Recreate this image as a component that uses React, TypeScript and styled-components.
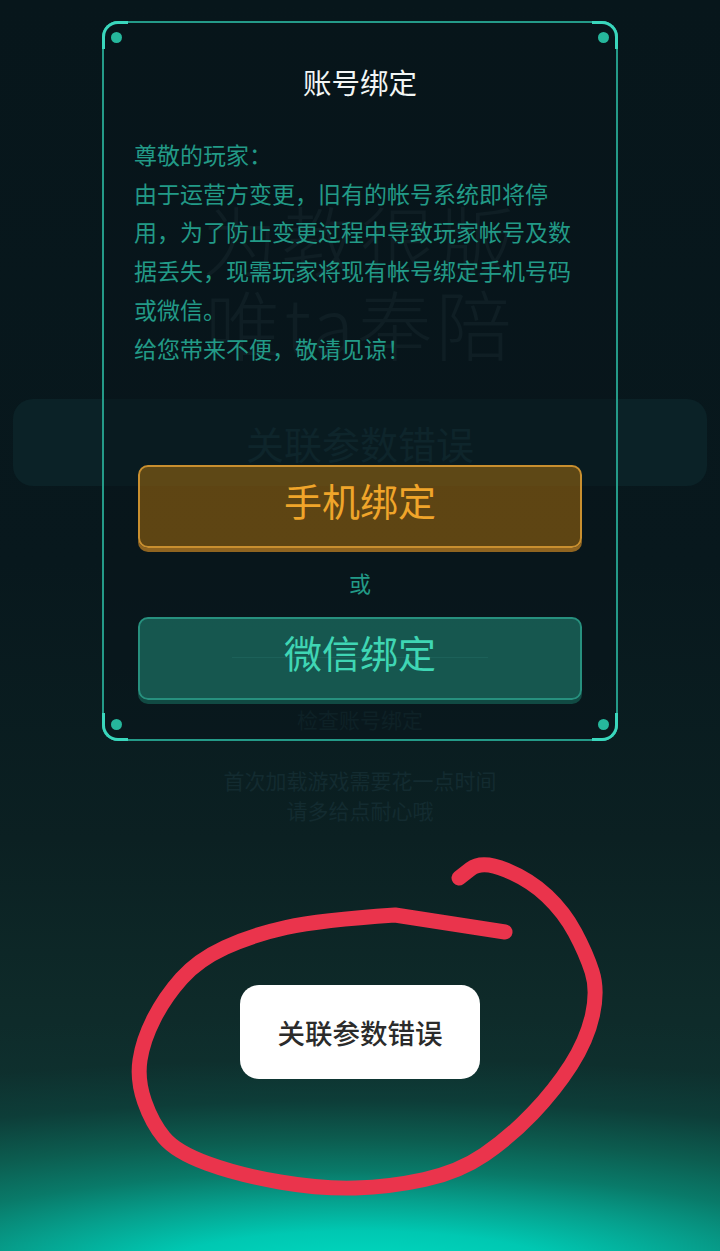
import * as React from 'react';
import styled, { createGlobalStyle } from 'styled-components';

const cjk = '"Noto Sans CJK SC", "Noto Sans", sans-serif';

const GlobalStyle = createGlobalStyle`
  html, body {
    margin: 0;
    padding: 0;
    background: #07151a;
  }
  * {
    box-sizing: border-box;
  }
`;

const Page = styled.div`
  position: relative;
  width: 720px;
  height: 1251px;
  overflow: hidden;
  font-family: ${cjk};
  display: flex;
  flex-direction: column;
  align-items: center;
  padding-top: 196px;
  background:
    radial-gradient(ellipse 1250px 260px at 360px 1275px, #00d6be 0%, #00d2ba 9%, #00c8b2 17%, #06a08d 29%, #097a69 40%, #0c5d50 52%, rgba(13, 62, 57, 0.95) 67%, rgba(14, 50, 47, 0.4) 83%, rgba(14, 45, 43, 0) 100%),
    linear-gradient(180deg, #07161b 0%, #08181d 45%, #0b2022 67%, #0e2a29 80%, #0e2f2e 88%, #0e3330 100%);
`;

const Slogan = styled.div`
  font-size: 76px;
  line-height: 84px;
  font-weight: 300;
  letter-spacing: 3px;
  text-align: center;
  color: #16292f;
`;

const ErrorBar = styled.div`
  width: 694px;
  height: 87px;
  margin-top: 35px;
  border-radius: 20px;
  background: #0b2227;
  color: #15363c;
  font-size: 38px;
  display: flex;
  align-items: center;
  justify-content: center;
`;

const LoadingRule = styled.div`
  width: 256px;
  height: 1px;
  margin-top: 171px;
  background: #1a3a3c;
`;

const LoadingLabel = styled.div`
  margin-top: 46px;
  font-size: 21px;
  line-height: 30px;
  color: #142e33;
`;

const LoadingHint = styled.div`
  margin-top: 31px;
  font-size: 21px;
  line-height: 30px;
  text-align: center;
  color: #132b30;
`;

const Modal = styled.div`
  position: absolute;
  left: 102px;
  top: 21px;
  width: 516px;
  height: 720px;
  border: 2px solid #249a88;
  border-radius: 16px;
  background: rgba(7, 20, 26, 0.5);
  padding: 0 30px;
  display: flex;
  flex-direction: column;
`;

const Corner = styled.span<{ $v: 'top' | 'bottom'; $h: 'left' | 'right' }>`
  position: absolute;
  ${(p) => p.$v}: -2px;
  ${(p) => p.$h}: -2px;
  width: 26px;
  height: 28px;
  border-${(p) => p.$v}: 3px solid #3ad6bc;
  border-${(p) => p.$h}: 3px solid #3ad6bc;
  border-${(p) => p.$v}-${(p) => p.$h}-radius: 16px;
`;

const Dot = styled.span<{ $v: 'top' | 'bottom'; $h: 'left' | 'right' }>`
  position: absolute;
  ${(p) => p.$v}: 9px;
  ${(p) => p.$h}: 7px;
  width: 11px;
  height: 11px;
  border-radius: 50%;
  background: #26b79c;
`;

const Title = styled.h2`
  margin: 38px 0 0;
  font-size: 28.5px;
  line-height: 42px;
  font-weight: 400;
  text-align: center;
  color: #f2f6f5;
`;

const Message = styled.div`
  margin-top: 32px;
  height: 330px;
  font-size: 23px;
  line-height: 38.7px;
  color: #229a87;
`;

const BindButton = styled.button<{ $tone: 'orange' | 'green' }>`
  display: block;
  flex: none;
  width: 444px;
  height: 83px;
  margin-left: 4px;
  padding: 0 0 14px;
  border-radius: 10px;
  font-family: inherit;
  font-size: 38px;
  line-height: 1;
  border: 2px solid ${(p) => (p.$tone === 'orange' ? '#c98f2f' : '#27907e')};
  box-shadow: 0 4px 0 ${(p) => (p.$tone === 'orange' ? '#8f6420' : '#114a43')};
  background: ${(p) => (p.$tone === 'orange' ? 'rgba(255, 158, 6, 0.35)' : 'rgba(50, 207, 175, 0.35)')};
  color: ${(p) => (p.$tone === 'orange' ? '#f0a52a' : '#3fd6b4')};
`;

const Or = styled.div`
  margin: 17px 0 18px;
  font-size: 22px;
  line-height: 34px;
  text-align: center;
  color: #229a87;
`;

const Toast = styled.div`
  position: absolute;
  left: 240px;
  top: 985px;
  width: 240px;
  height: 94px;
  border-radius: 19px;
  background: #ffffff;
  color: #2b2b2b;
  font-size: 27.5px;
  font-weight: 500;
  display: flex;
  align-items: center;
  justify-content: center;
`;

const Scribble = styled.svg`
  position: absolute;
  left: 0;
  top: 840px;
  pointer-events: none;
`;

// hand drawn circle: straight first stroke, then round to where the pen started
const penPoints: [number, number][] = [
  [505, 92], [395, 75], [320, 80], [252, 95], [198, 120], [165, 157], [143, 200],
  [137, 240], [152, 283], [176, 312], [239, 335], [321, 349], [390, 347], [459, 332],
  [510, 297], [555, 250], [587, 200], [598, 150], [586, 113], [564, 72], [530, 40],
  [482, 20], [459, 38],
];

const smoothPath = (pts: [number, number][]): string => {
  let d = `M${pts[0][0]} ${pts[0][1]} L${pts[1][0]} ${pts[1][1]}`;
  for (let i = 2; i < pts.length - 1; i++) {
    const mx = (pts[i][0] + pts[i + 1][0]) / 2;
    const my = (pts[i][1] + pts[i + 1][1]) / 2;
    d += ` Q${pts[i][0]} ${pts[i][1]} ${mx} ${my}`;
  }
  const last = pts[pts.length - 1];
  return `${d} L${last[0]} ${last[1]}`;
};

const App: React.FC = () => (
  <Page>
    <GlobalStyle />
    <Slogan>
      为教很版
      <br />
      唯ta奉陪
    </Slogan>
    <ErrorBar>关联参数错误</ErrorBar>
    <LoadingRule />
    <LoadingLabel>检查账号绑定</LoadingLabel>
    <LoadingHint>
      首次加载游戏需要花一点时间
      <br />
      请多给点耐心哦
    </LoadingHint>

    <Modal>
      <Corner $v="top" $h="left" />
      <Corner $v="top" $h="right" />
      <Corner $v="bottom" $h="left" />
      <Corner $v="bottom" $h="right" />
      <Dot $v="top" $h="left" />
      <Dot $v="top" $h="right" />
      <Dot $v="bottom" $h="left" />
      <Dot $v="bottom" $h="right" />
      <Title>账号绑定</Title>
      <Message>
        尊敬的玩家：
        <br />
        由于运营方变更，旧有的帐号系统即将停用，为了防止变更过程中导致玩家帐号及数据丢失，现需玩家将现有帐号绑定手机号码或微信。
        <br />
        给您带来不便，敬请见谅！
      </Message>
      <BindButton $tone="orange">手机绑定</BindButton>
      <Or>或</Or>
      <BindButton $tone="green">微信绑定</BindButton>
    </Modal>

    <Toast>关联参数错误</Toast>

    <Scribble width="720" height="411" viewBox="0 0 720 411" fill="none">
      <path
        d={smoothPath(penPoints)}
        stroke="#ea344c"
        strokeWidth="15"
        strokeLinecap="round"
        strokeLinejoin="round"
      />
    </Scribble>
  </Page>
);

export default App;
